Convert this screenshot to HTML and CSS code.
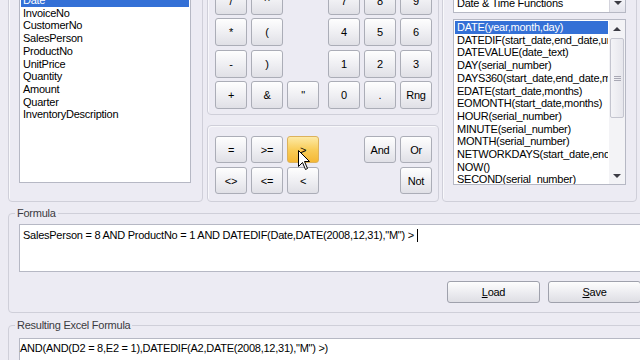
FILE: index.html
```html
<!DOCTYPE html>
<html lang="en">
<head>
  <meta charset="UTF-8">
  <title>Formula Builder</title>
  <link rel="stylesheet" href="styles.css">
</head>
<body>
  <div class="app">
    <div class="top">
      <div class="group fields">
        <ul class="listbox">
          <li class="sel">Date</li>
          <li>InvoiceNo</li>
          <li>CustomerNo</li>
          <li>SalesPerson</li>
          <li>ProductNo</li>
          <li>UnitPrice</li>
          <li>Quantity</li>
          <li>Amount</li>
          <li>Quarter</li>
          <li>InventoryDescription</li>
        </ul>
      </div>

      <div class="middle">
        <div class="group keypad">
          <div class="keys">
            <div class="keygrid">
              <button class="btn">/</button>
              <button class="btn">^</button>
              <span></span>
              <button class="btn">*</button>
              <button class="btn">(</button>
              <span></span>
              <button class="btn">-</button>
              <button class="btn">)</button>
              <span></span>
              <button class="btn">+</button>
              <button class="btn">&amp;</button>
              <button class="btn">"</button>
            </div>
            <div class="keygrid">
              <button class="btn">7</button>
              <button class="btn">8</button>
              <button class="btn">9</button>
              <button class="btn">4</button>
              <button class="btn">5</button>
              <button class="btn">6</button>
              <button class="btn">1</button>
              <button class="btn">2</button>
              <button class="btn">3</button>
              <button class="btn">0</button>
              <button class="btn">.</button>
              <button class="btn">Rng</button>
            </div>
          </div>
        </div>

        <div class="group operators">
          <div class="keys">
            <div class="keygrid ops">
              <button class="btn">=</button>
              <button class="btn">&gt;=</button>
              <button class="btn hot">&gt;</button>
              <button class="btn">&lt;&gt;</button>
              <button class="btn">&lt;=</button>
              <button class="btn">&lt;</button>
            </div>
            <div class="keygrid ops">
              <span></span>
              <button class="btn">And</button>
              <button class="btn">Or</button>
              <span></span>
              <span></span>
              <button class="btn">Not</button>
            </div>
          </div>
          <svg class="cursor" width="13" height="21" viewBox="0 0 13 21">
            <path d="M0.5 0.5 L0.5 16.5 L4.5 12.5 L7.5 19.5 L9.5 18.5 L6.5 11.5 L11.5 11.5 Z" fill="#fff" stroke="#000" stroke-width="1" stroke-linejoin="miter"/>
          </svg>
        </div>
      </div>

      <div class="group functions">
        <div class="combo">
          <span class="combo-text">Date &amp; Time Functions</span>
          <span class="combo-drop"><i class="arrow-down"></i></span>
        </div>
        <div class="fnlist">
          <ul class="items">
            <li class="sel">DATE(year,month,day)</li>
            <li>DATEDIF(start_date,end_date,unit)</li>
            <li>DATEVALUE(date_text)</li>
            <li>DAY(serial_number)</li>
            <li>DAYS360(start_date,end_date,method)</li>
            <li>EDATE(start_date,months)</li>
            <li>EOMONTH(start_date,months)</li>
            <li>HOUR(serial_number)</li>
            <li>MINUTE(serial_number)</li>
            <li>MONTH(serial_number)</li>
            <li>NETWORKDAYS(start_date,end_date,holidays)</li>
            <li>NOW()</li>
            <li>SECOND(serial_number)</li>
            <li>TIME(hour,minute,second)</li>
          </ul>
          <div class="vscroll">
            <div class="sb-btn"><i class="arrow-up"></i></div>
            <div class="sb-track">
              <div class="sb-thumb">
                <svg width="7" height="5" viewBox="0 0 7 5">
                  <path d="M0 0.5 H7 M0 2.5 H7 M0 4.5 H7" stroke="#a8a8b4" stroke-width="1"/>
                </svg>
              </div>
            </div>
            <div class="sb-btn"><i class="arrow-down"></i></div>
          </div>
        </div>
      </div>
    </div>

    <fieldset class="frame formula">
      <legend>Formula</legend>
      <div class="textarea">SalesPerson = 8 AND ProductNo = 1 AND DATEDIF(Date,DATE(2008,12,31),"M") &gt; <span class="caret"></span></div>
      <div class="actions">
        <button class="btn wide"><u>L</u>oad</button>
        <button class="btn wide"><u>S</u>ave</button>
      </div>
    </fieldset>

    <fieldset class="frame result">
      <legend>Resulting Excel Formula</legend>
      <div class="textbox">AND(AND(D2 = 8,E2 = 1),DATEDIF(A2,DATE(2008,12,31),"M") &gt;)</div>
    </fieldset>
  </div>
</body>
</html>
```

FILE: styles.css
```css
* {
  margin: 0;
  padding: 0;
  box-sizing: border-box;
}

html,
body {
  width: 640px;
  height: 360px;
  overflow: hidden;
  background: #ecebf3;
}

body {
  font-family: "Liberation Sans", Arial, sans-serif;
  font-size: 11px;
  letter-spacing: -0.25px;
  color: #000;
}

ul {
  list-style: none;
}

.app {
  padding-top: 1px;
}

/* top row: fields / keypad / functions */

.top {
  display: flex;
  margin: -31px 0 0 8px;
  height: 232px;
}

.group {
  border: 1px solid #cfcfd9;
  border-radius: 4px;
  box-shadow: inset 1px 1px 0 #f8f8fb;
}

.fields {
  width: 195px;
  padding: 21px 11px 18px 10px;
  display: flex;
}

.listbox {
  flex: 1;
  background: #fff;
  border: 1px solid #b6b8c4;
  padding: 1px;
}

.listbox li,
.items li {
  line-height: 12.7px;
  padding-left: 2px;
  white-space: nowrap;
  overflow: hidden;
}

.sel {
  background: #3470d6;
  color: #fff;
}

.middle {
  width: 232px;
  margin-left: 4px;
  display: flex;
  flex-direction: column;
  gap: 10px;
}

.keypad {
  height: 145px;
  display: flex;
  flex-direction: column;
  justify-content: flex-end;
  padding: 0 5px 5px 7px;
}

.keys {
  display: flex;
  gap: 9px;
}

.keygrid {
  display: grid;
  grid-template-columns: repeat(3, 32px);
  grid-auto-rows: 28px;
  column-gap: 4px;
  row-gap: 3.5px;
}

.keygrid.ops {
  grid-auto-rows: 27px;
  row-gap: 4px;
}

.operators {
  position: relative;
  height: 77px;
  padding: 10px 5px 0 7px;
}

.cursor {
  position: absolute;
  left: 90px;
  top: 24px;
}

.btn {
  font: inherit;
  letter-spacing: inherit;
  color: #000;
  background: linear-gradient(#fefefe, #eeeef2 55%, #e0e0e6);
  border: 1px solid #abadb7;
  border-radius: 3px;
}

.btn.hot {
  background: linear-gradient(#fdeaa6, #f9cd5a 50%, #f5b835);
  border-color: #dcb25c;
}

.functions {
  width: 195px;
  margin-left: 3px;
  padding: 21px 10px 16px 10px;
  display: flex;
  flex-direction: column;
}

.combo {
  height: 21px;
  background: #fff;
  border: 1px solid #b6b8c4;
  display: flex;
  align-items: center;
}

.combo-text {
  flex: 1;
  padding-left: 3px;
}

.combo-drop {
  width: 16px;
  height: 19px;
  display: flex;
  align-items: center;
  justify-content: center;
  background: linear-gradient(#fbfbfd, #e4e4ec);
  border-left: 1px solid #d3d3dc;
}

.fnlist {
  flex: 1;
  margin-top: 6px;
  background: #fff;
  border: 1px solid #b6b8c4;
  display: flex;
  overflow: hidden;
}

.items {
  flex: 1;
  min-width: 0;
  padding: 1px;
  overflow: hidden;
}

.vscroll {
  width: 16px;
  display: flex;
  flex-direction: column;
  background: #f3f3f6;
}

.sb-btn {
  height: 17px;
  display: flex;
  align-items: center;
  justify-content: center;
}

.sb-track {
  flex: 1;
  padding: 1px 1px 0;
}

.sb-thumb {
  height: 80px;
  background: linear-gradient(90deg, #f4f4f7, #e6e6ec);
  border: 1px solid #c4c5cf;
  border-radius: 2px;
  display: flex;
  align-items: center;
  justify-content: center;
}

.arrow-up,
.arrow-down {
  width: 0;
  height: 0;
  border-left: 4px solid transparent;
  border-right: 4px solid transparent;
}

.arrow-up {
  border-bottom: 4px solid #3c3c44;
}

.arrow-down {
  border-top: 4px solid #3c3c44;
}

/* bottom group boxes */

.frame {
  width: 644px;
  margin-left: 8px;
  min-width: 0;
  border: 1px solid #cfcfd9;
  border-radius: 4px;
  padding: 4px 10px 9px;
}

.frame legend {
  line-height: 14px;
  padding: 0 2px;
  margin-left: -4px;
  color: #3a3a40;
}

.formula {
  margin-top: 4px;
}

.textarea {
  height: 48px;
  background: #fff;
  border: 1px solid #b6b8c4;
  padding: 4px 3px;
  line-height: 13px;
  white-space: nowrap;
}

.caret {
  display: inline-block;
  width: 1px;
  height: 13px;
  background: #000;
  vertical-align: top;
}

.actions {
  display: flex;
  justify-content: flex-end;
  gap: 8px;
  margin-top: 9px;
}

.btn.wide {
  width: 93px;
  height: 22px;
  background: linear-gradient(#fdfdfd, #ececf0 55%, #dedee4);
  border-color: #9fa1ac;
}

.result {
  margin-top: 5px;
  padding-top: 6px;
}

.textbox {
  height: 40px;
  background: #fff;
  border: 1px solid #b6b8c4;
  padding: 3px 0;
  line-height: 13px;
  white-space: nowrap;
}
```
